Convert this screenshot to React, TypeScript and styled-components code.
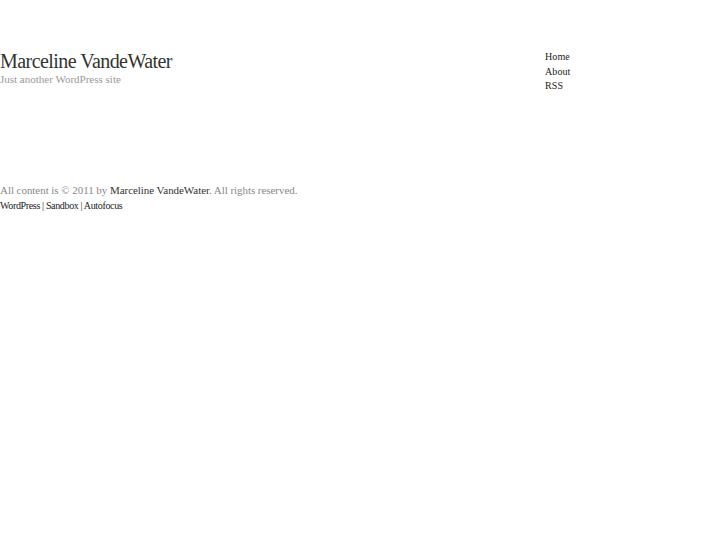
import { createGlobalStyle, styled } from "styled-components";

const GlobalStyle = createGlobalStyle`
  html, body {
    margin: 0;
    padding: 0;
    background: #fff;
    font-family: "Liberation Serif", "Times New Roman", serif;
  }
`;

const Page = styled.div`
  width: 727px;
`;

const Header = styled.div`
  display: flex;
  justify-content: space-between;
  padding-top: 50px;
  width: 600px;
`;

const Branding = styled.div`
  display: flex;
  flex-direction: column;
`;

const Title = styled.h1`
  margin: 0;
  font-size: 20px;
  font-weight: normal;
  line-height: 23px;
  color: #333;
  letter-spacing: -0.55px;
`;

const Tagline = styled.div`
  font-size: 11px;
  line-height: 12px;
  color: #999;
`;

const Nav = styled.ul`
  list-style: none;
  margin: 0;
  padding: 0;
  width: 55px;
`;

const NavItem = styled.li`
  font-size: 10px;
  line-height: 14.5px;
  color: #222;
  letter-spacing: 0.1px;
`;

const Footer = styled.div`
  margin-top: 89px;
`;

const Copyright = styled.div`
  font-size: 11px;
  line-height: 15px;
  color: #888;
  letter-spacing: -0.05px;
`;

const Strong = styled.span`
  color: #333;
`;

const Credits = styled.div`
  font-size: 10px;
  line-height: 16px;
  color: #222;
  letter-spacing: -0.35px;
`;

export default function App() {
  return (
    <>
      <GlobalStyle />
      <Page>
        <Header>
          <Branding>
            <Title>Marceline VandeWater</Title>
            <Tagline>Just another WordPress site</Tagline>
          </Branding>
          <Nav>
            <NavItem>Home</NavItem>
            <NavItem>About</NavItem>
            <NavItem>RSS</NavItem>
          </Nav>
        </Header>
        <Footer>
          <Copyright>
            All content is © 2011 by <Strong>Marceline VandeWater</Strong>. All rights reserved.
          </Copyright>
          <Credits>WordPress | Sandbox | Autofocus</Credits>
        </Footer>
      </Page>
    </>
  );
}
